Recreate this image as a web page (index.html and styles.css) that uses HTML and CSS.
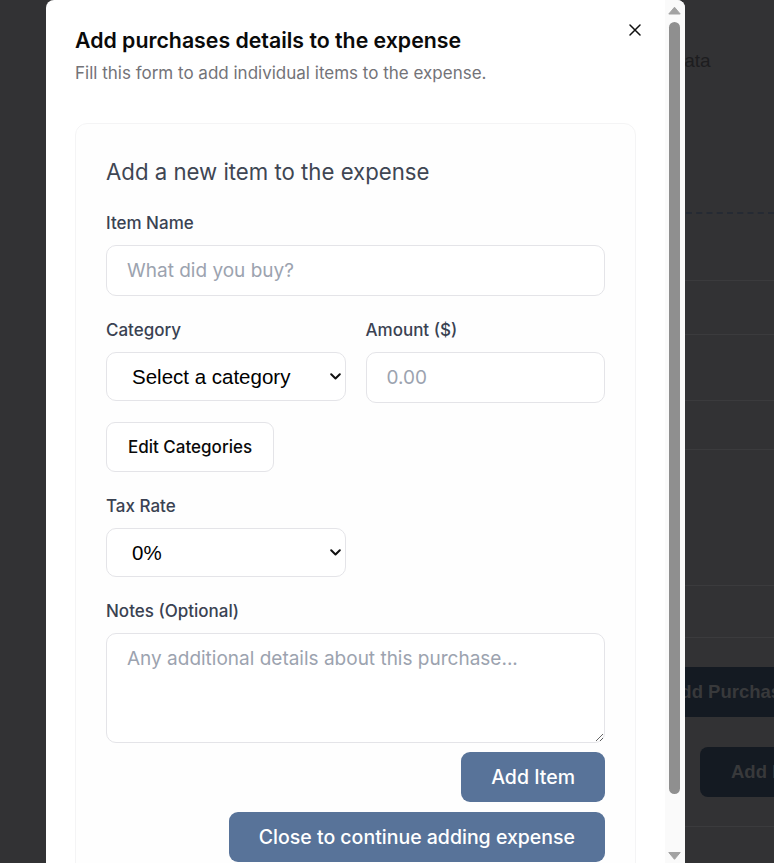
FILE: index.html
```html
<!DOCTYPE html>
<html lang="en">
<head>
<meta charset="utf-8">
<title>Add purchases details</title>
<link rel="stylesheet" href="styles.css">
</head>
<body>
  <div class="page" aria-hidden="true">
    <p class="page-hint">Receipt data</p>
    <div class="dropzone"></div>
    <div class="bg-row h1"></div>
    <div class="bg-row h2"></div>
    <div class="bg-row h3"></div>
    <div class="bg-row h4"></div>
    <div class="bg-row h5"></div>
    <div class="bg-row h6"></div>
    <button class="page-btn page-btn-wide">Add Purchases</button>
    <div class="page-actions">
      <button class="page-btn page-btn-add">Add Expense</button>
    </div>
  </div>

  <div class="modal" role="dialog" aria-labelledby="dlg-title">
    <div class="modal-body">
      <button class="close" aria-label="Close">
        <svg width="12" height="12" viewBox="0 0 12 12" aria-hidden="true">
          <path d="M1 1 L11 11 M11 1 L1 11" stroke="#111" stroke-width="1.5" stroke-linecap="round" fill="none"/>
        </svg>
      </button>
      <h2 class="modal-title" id="dlg-title">Add purchases details to the expense</h2>
      <p class="modal-desc">Fill this form to add individual items to the expense.</p>

      <section class="card">
        <h3 class="card-title">Add a new item to the expense</h3>

        <div class="field field-first">
          <label class="label" for="item-name">Item Name</label>
          <input class="control" id="item-name" type="text" placeholder="What did you buy?">
        </div>

        <div class="grid field">
          <div>
            <label class="label" for="category">Category</label>
            <div class="select-wrap">
              <select class="select" id="category">
                <option>Select a category</option>
              </select>
              <svg class="chevron" width="11" height="7" viewBox="0 0 11 7" aria-hidden="true">
                <path d="M1.2 1.2 L5.5 5.5 L9.8 1.2" stroke="#111" stroke-width="2" fill="none" stroke-linecap="round" stroke-linejoin="round"/>
              </svg>
            </div>
          </div>
          <div>
            <label class="label" for="amount">Amount ($)</label>
            <input class="control" id="amount" type="text" placeholder="0.00">
          </div>
        </div>

        <button class="btn-outline">Edit Categories</button>

        <div class="grid field">
          <div>
            <label class="label" for="tax">Tax Rate</label>
            <div class="select-wrap">
              <select class="select" id="tax">
                <option>0%</option>
              </select>
              <svg class="chevron" width="11" height="7" viewBox="0 0 11 7" aria-hidden="true">
                <path d="M1.2 1.2 L5.5 5.5 L9.8 1.2" stroke="#111" stroke-width="2" fill="none" stroke-linecap="round" stroke-linejoin="round"/>
              </svg>
            </div>
          </div>
        </div>

        <div class="field">
          <label class="label" for="notes">Notes (Optional)</label>
          <textarea class="control textarea" id="notes" placeholder="Any additional details about this purchase..."></textarea>
        </div>

        <div class="actions">
          <button class="btn-primary">Add Item</button>
          <button class="btn-primary">Close to continue adding expense</button>
        </div>
      </section>
    </div>

    <div class="scrollbar" aria-hidden="true">
      <svg class="sb-btn" width="20" height="19" viewBox="0 0 20 19">
        <path d="M3.8 14 L9.5 7.2 L15.2 14 Z" fill="#a2a2a2" stroke="#a2a2a2" stroke-width="1" stroke-linejoin="round"/>
      </svg>
      <div class="sb-track"><div class="sb-thumb"></div></div>
      <svg class="sb-btn" width="20" height="19" viewBox="0 0 20 19">
        <path d="M3.8 8.5 L15.2 8.5 L9.5 15.3 Z" fill="#a2a2a2" stroke="#a2a2a2" stroke-width="1" stroke-linejoin="round"/>
      </svg>
    </div>
  </div>
</body>
</html>
```

FILE: styles.css
```css
* { box-sizing: border-box; }

html, body {
  margin: 0;
  height: 100%;
}

body {
  background: #323234;
  font-family: Inter, "Noto Sans", sans-serif;
  overflow: hidden;
}

/* ---------- dimmed page behind the dialog ---------- */
.page {
  padding: 50px 0 0 604px;
  font-family: "Liberation Sans", Arial, sans-serif;
}

.page-hint {
  margin: 0;
  font-size: 19px;
  line-height: 22px;
  color: #1d1d1f;
}

.dropzone {
  height: 142px;
  border-bottom: 2px dashed #252a33;
}

.bg-row { border-bottom: 1px solid #3b3b3d; }
.bg-row.h1 { height: 67px; }
.bg-row.h2 { height: 54px; }
.bg-row.h3 { height: 66px; }
.bg-row.h4 { height: 49px; }
.bg-row.h5 { height: 136px; }
.bg-row.h6 { height: 52px; }

.page-btn {
  display: block;
  border: 0;
  background: #141a22;
  color: #38393b;
  font-family: "Liberation Sans", Arial, sans-serif;
  font-weight: 700;
  font-size: 18.5px;
  height: 50px;
  border-radius: 8px;
  text-align: left;
  white-space: nowrap;
}

.page-btn-wide {
  margin-top: 29px;
  width: 400px;
  padding: 0 0 0 63px;
}

.page-actions {
  padding: 30px 0 29px 96px;
  border-bottom: 1px solid #3b3b3d;
}

.page-btn-add {
  width: 200px;
  padding: 0 0 0 31px;
}

/* ---------- dialog ---------- */
.modal {
  position: fixed;
  top: 0;
  left: 46px;
  width: 639px;
  height: 863px;
  background: #fff;
  border-radius: 8px 8px 0 0;
  overflow: hidden;
  display: flex;
}

.modal-body {
  position: relative;
  flex: 1;
  min-width: 0;
  overflow: hidden;
  padding: 26px 29px 0 29px;
}

.scrollbar {
  width: 20px;
  flex: none;
  background: #fafafa;
  display: flex;
  flex-direction: column;
}

.sb-btn { display: block; flex: none; }

.sb-track {
  flex: 1;
  padding: 3px 0 0 4px;
}

.sb-thumb {
  width: 11px;
  height: 772px;
  border-radius: 6px;
  background: #8f8f8f;
}

.close {
  position: absolute;
  top: 24px;
  right: 24px;
  width: 12px;
  height: 12px;
  padding: 0;
  border: 0;
  background: none;
  display: flex;
}

.modal-title {
  margin: 0;
  font-size: 21.3px;
  line-height: 28px;
  font-weight: 600;
  color: #0a0a0a;
}

.modal-desc {
  margin: 7px 0 0;
  font-size: 17px;
  line-height: 24px;
  color: #737378;
}

/* ---------- card ---------- */
.card {
  margin-top: 38px;
  background: #fefefe;
  border: 1px solid #f4f4f5;
  border-radius: 12px;
  padding: 32px 30px 31px 30px;
}

.card-title {
  margin: 0;
  font-size: 22.2px;
  line-height: 32px;
  font-weight: 400;
  color: #3f4653;
}

.field { margin-top: 22px; }
.field-first { margin-top: 23px; }

.label {
  display: block;
  font-size: 17px;
  line-height: 24px;
  font-weight: 500;
  color: #3a4252;
  margin-bottom: 10px;
}

.control {
  display: block;
  width: 100%;
  height: 51px;
  border: 1px solid #e4e4e8;
  border-radius: 10px;
  background: #fff;
  padding: 0 20px;
  font-family: Inter, "Noto Sans", sans-serif;
  font-size: 19px;
  color: #111;
  outline: none;
}

.control::placeholder { color: #9ca3af; }

.textarea {
  height: 110px;
  padding: 10px 20px;
  line-height: 29px;
  resize: vertical;
}

.grid {
  display: grid;
  grid-template-columns: 1fr 1fr;
  column-gap: 20px;
  align-items: start;
}

.select-wrap { position: relative; }

.select {
  display: block;
  width: 100%;
  height: 49px;
  appearance: none;
  -webkit-appearance: none;
  border: 1px solid #e4e4e8;
  border-radius: 10px;
  background: #fff;
  padding: 0 30px 0 25px;
  font-family: "Liberation Sans", Arial, sans-serif;
  font-size: 20.5px;
  color: #000;
  outline: none;
}

.chevron {
  position: absolute;
  right: 5px;
  top: 21px;
  pointer-events: none;
}

.btn-outline {
  display: block;
  margin-top: 19px;
  height: 50px;
  padding: 0 21px;
  border: 1px solid #e4e4e8;
  border-radius: 9px;
  background: #fff;
  font-family: Inter, "Noto Sans", sans-serif;
  font-size: 17px;
  font-weight: 500;
  color: #0a0a0a;
}

.actions {
  margin-top: 9px;
  display: flex;
  flex-direction: column;
  align-items: flex-end;
  gap: 10px;
}

.btn-primary {
  height: 50px;
  padding: 0 30px;
  border: 0;
  border-radius: 9px;
  background: #587399;
  color: #fff;
  font-family: Inter, "Noto Sans", sans-serif;
  font-size: 19.5px;
  font-weight: 500;
}
```
